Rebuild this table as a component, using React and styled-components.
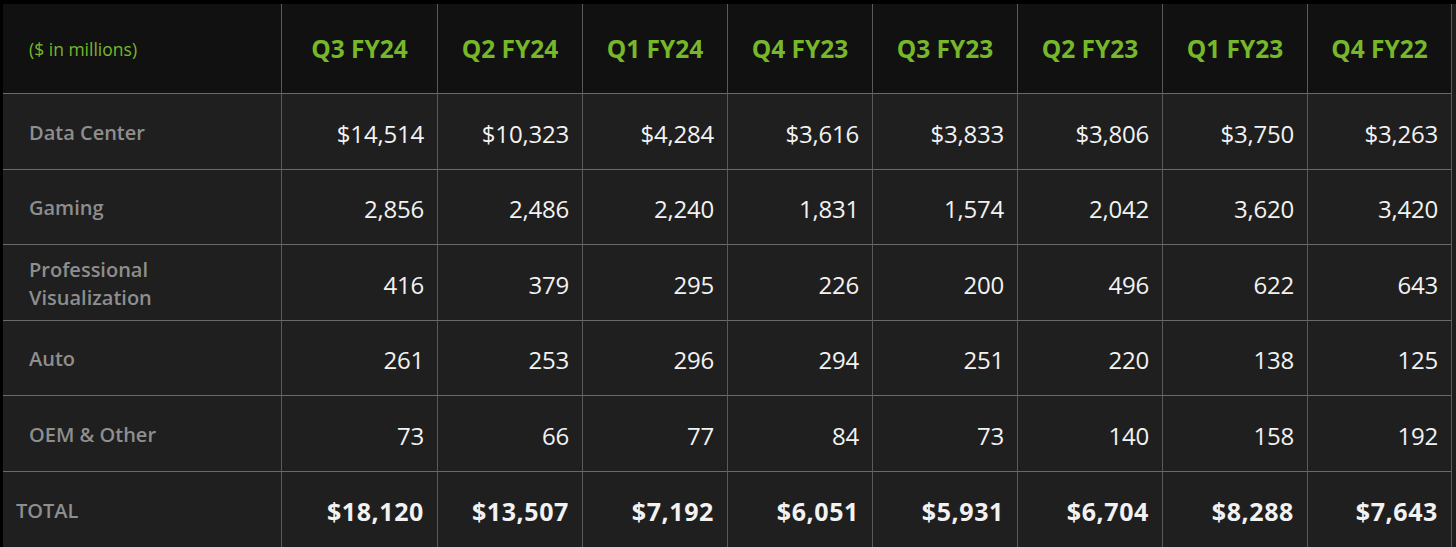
import React from "react";
import styled, { createGlobalStyle } from "styled-components";

const GlobalStyle = createGlobalStyle`
  html, body {
    margin: 0;
    padding: 0;
    background: #000;
    overflow: hidden;
  }
  body {
    font-family: "Open Sans", "Liberation Sans", sans-serif;
  }
`;

const Page = styled.div`
  width: 1456px;
  height: 547px;
  padding: 4px 0 0 3px;
  box-sizing: border-box;
  overflow: hidden;
`;

const Grid = styled.div`
  display: grid;
  grid-template-columns: 278px 156px repeat(7, 145px);
  grid-template-rows: 89px 76px 75px 76px 75px 76px 76px;
  background: #1e1e1e;
`;

const Cell = styled.div`
  display: flex;
  align-items: center;
  box-sizing: border-box;
  border-left: ${(p) => (p.first ? "none" : "1px solid #5a5a5a")};
  border-right: ${(p) => (p.last ? "1px solid #5a5a5a" : "none")};
`;

const HeadCell = styled(Cell)`
  background: #111111;
  justify-content: center;
  color: #77b82a;
  font-size: 24.5px;
  font-weight: 700;
`;

const UnitCell = styled(HeadCell)`
  justify-content: flex-start;
  padding-left: 26px;
  font-size: 17.5px;
  font-weight: 400;
`;

const BodyCell = styled(Cell)`
  border-top: 1px solid #6a6a6a;
  background: #1f1f1f;
`;

const LabelCell = styled(BodyCell)`
  padding-left: ${(p) => (p.total ? "13px" : "26px")};
  padding-top: 2px;
  color: #8e8e8e;
  font-size: 20px;
  font-weight: 600;
  line-height: 28px;
`;

const ValueCell = styled(BodyCell)`
  justify-content: flex-end;
  padding-right: 13px;
  padding-top: 3px;
  color: #f2f2f2;
  font-size: ${(p) => (p.total ? "25px" : "24px")};
  letter-spacing: ${(p) => (p.total ? "0.6px" : "-0.2px")};
  font-weight: ${(p) => (p.total ? 700 : 400)};
`;

const quarters = [
  "Q3 FY24",
  "Q2 FY24",
  "Q1 FY24",
  "Q4 FY23",
  "Q3 FY23",
  "Q2 FY23",
  "Q1 FY23",
  "Q4 FY22",
];

const rows = [
  {
    label: "Data Center",
    values: ["$14,514", "$10,323", "$4,284", "$3,616", "$3,833", "$3,806", "$3,750", "$3,263"],
  },
  {
    label: "Gaming",
    values: ["2,856", "2,486", "2,240", "1,831", "1,574", "2,042", "3,620", "3,420"],
  },
  {
    label: (
      <>
        Professional
        <br />
        Visualization
      </>
    ),
    values: ["416", "379", "295", "226", "200", "496", "622", "643"],
  },
  {
    label: "Auto",
    values: ["261", "253", "296", "294", "251", "220", "138", "125"],
  },
  {
    label: "OEM & Other",
    values: ["73", "66", "77", "84", "73", "140", "158", "192"],
  },
  {
    label: "TOTAL",
    total: true,
    values: ["$18,120", "$13,507", "$7,192", "$6,051", "$5,931", "$6,704", "$8,288", "$7,643"],
  },
];

export default function App() {
  return (
    <>
      <GlobalStyle />
      <Page>
        <Grid>
          <UnitCell first>($ in millions)</UnitCell>
          {quarters.map((q, i) => (
            <HeadCell key={q} last={i === quarters.length - 1}>
              {q}
            </HeadCell>
          ))}
          {rows.map((row, r) => (
            <React.Fragment key={r}>
              <LabelCell first total={row.total}>
                <span>{row.label}</span>
              </LabelCell>
              {row.values.map((v, i) => (
                <ValueCell key={i} total={row.total} last={i === row.values.length - 1}>
                  {v}
                </ValueCell>
              ))}
            </React.Fragment>
          ))}
        </Grid>
      </Page>
    </>
  );
}
